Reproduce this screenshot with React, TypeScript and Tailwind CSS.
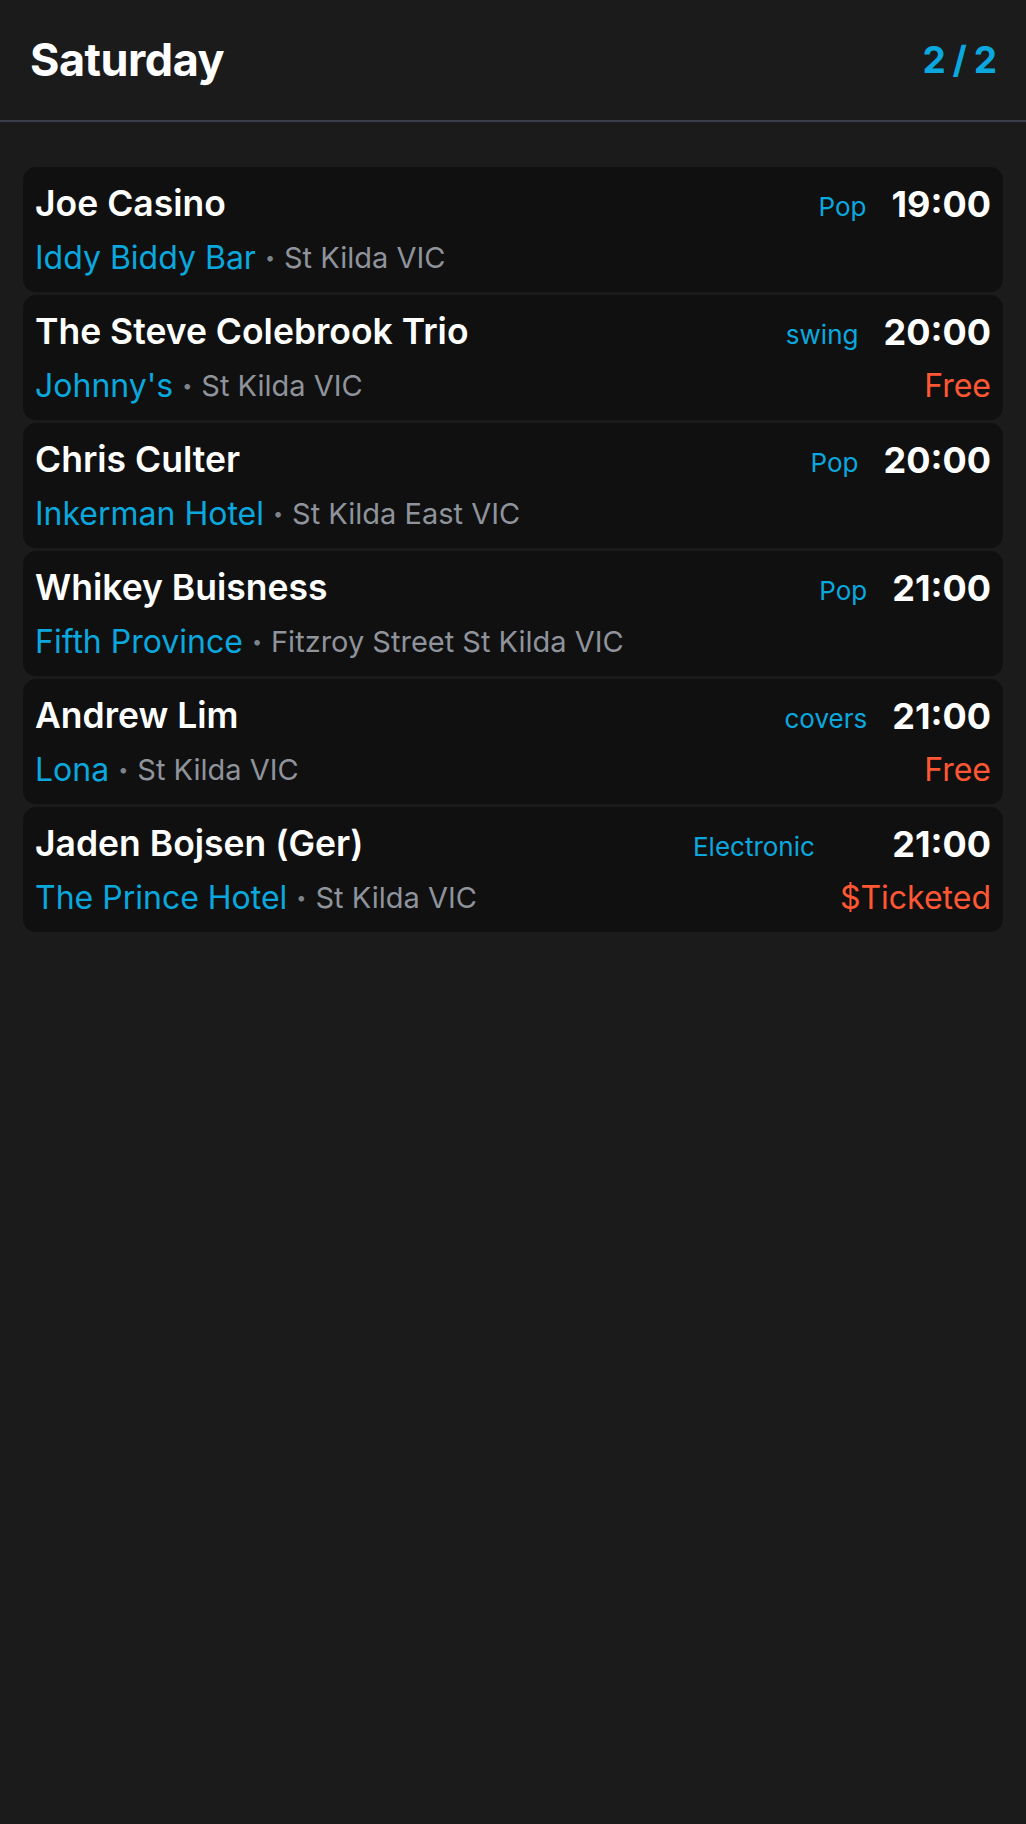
import React from "react";

interface Gig {
    artist: string;
    venue: string;
    suburb: string;
    genre: string;
    time: string;
    price?: string;
}

const gigs: Gig[] = [
    { artist: "Joe Casino", venue: "Iddy Biddy Bar", suburb: "St Kilda VIC", genre: "Pop", time: "19:00" },
    { artist: "The Steve Colebrook Trio", venue: "Johnny's", suburb: "St Kilda VIC", genre: "swing", time: "20:00", price: "Free" },
    { artist: "Chris Culter", venue: "Inkerman Hotel", suburb: "St Kilda East VIC", genre: "Pop", time: "20:00" },
    { artist: "Whikey Buisness", venue: "Fifth Province", suburb: "Fitzroy Street St Kilda VIC", genre: "Pop", time: "21:00" },
    { artist: "Andrew Lim", venue: "Lona", suburb: "St Kilda VIC", genre: "covers", time: "21:00", price: "Free" },
    { artist: "Jaden Bojsen (Ger)", venue: "The Prince Hotel", suburb: "St Kilda VIC", genre: "Electronic", time: "21:00", price: "$Ticketed" },
];

function GigCard({ gig }: { gig: Gig }) {
    return (
        <div className="flex items-start rounded-[13px] bg-[#101010] pl-[12px] pr-[12px] pt-[15px] pb-[14px]">
            <div className="flex-1 min-w-0">
                <div className="h-[44px] text-[35.5px] leading-[44px] font-semibold text-white truncate">
                    {gig.artist}
                </div>
                <div className="mt-[12px] flex h-[40px] items-center whitespace-nowrap">
                    <span className="text-[32px] leading-[40px] text-[#0aa8de]">{gig.venue}</span>
                    <span className="mx-[9px] text-[18px] leading-[40px] text-[#7d828b]">•</span>
                    <span className="text-[29px] leading-[40px] text-[#8e939c]">{gig.suburb}</span>
                </div>
            </div>
            <div className="mr-[25px] pt-[3px] text-[26px] leading-[44px] text-[#0aa8de]">{gig.genre}</div>
            <div className="flex flex-col items-end">
                <div className="h-[44px] text-[36px] leading-[44px] font-bold text-white">{gig.time}</div>
                {gig.price && (
                    <div className="mt-[12px] h-[40px] text-[32px] leading-[40px] text-[#ff5733]">{gig.price}</div>
                )}
            </div>
        </div>
    );
}

export default function App() {
    return (
        <div className="min-h-screen bg-[#1b1b1b] font-['Inter',sans-serif]">
            <header className="flex h-[122px] items-center justify-between border-b-2 border-[#39404b] px-[30px]">
                <h1 className="text-[45px] font-bold text-white tracking-[-0.5px]">Saturday</h1>
                <span className="text-[37px] font-bold text-[#0aa8de] tracking-[-1px]">2 / 2</span>
            </header>
            <main className="flex flex-col gap-[3px] px-[23px] pt-[45px]">
                {gigs.map((gig, idx) => (
                    <GigCard key={idx} gig={gig} />
                ))}
            </main>
        </div>
    );
}
